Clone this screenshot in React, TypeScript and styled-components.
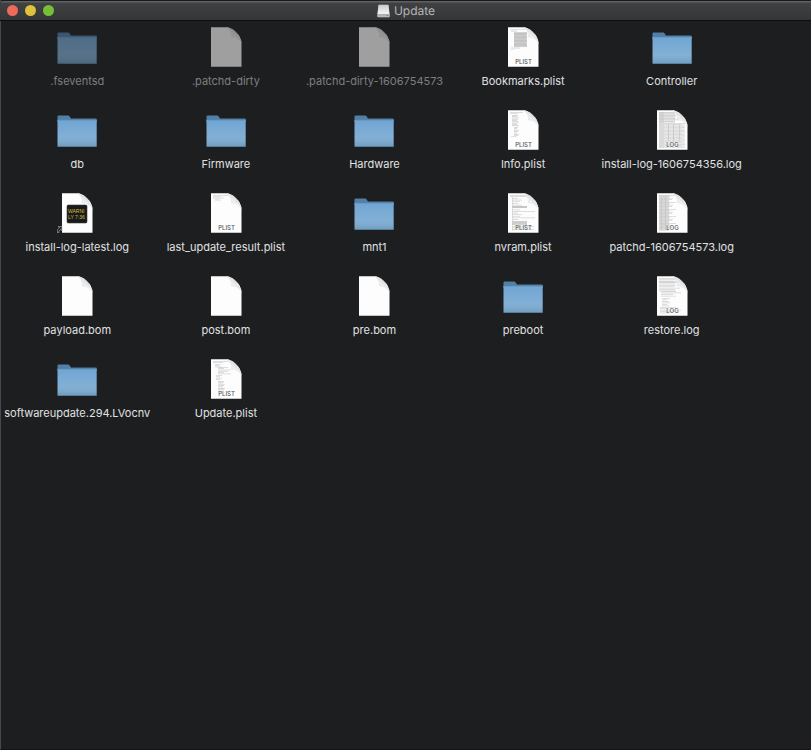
import React from "react";
import styled, { createGlobalStyle } from "styled-components";

const GlobalStyle = createGlobalStyle`
  * { box-sizing: border-box; }
  body { margin: 0; background: #1d1e20; }
`;

const Window = styled.main`
  display: flex;
  flex-direction: column;
  min-height: 100vh;
  background: #1d1e20;
  border-left: 1px solid #47494b;
  border-bottom: 1px solid #141216;
  font-family: Inter, "Liberation Sans", sans-serif;
  text-rendering: geometricPrecision;
`;

const TitleBar = styled.header`
  display: grid;
  grid-template-columns: 1fr auto 1fr;
  align-items: center;
  height: 21px;
  padding: 1px 6px 0 7px;
  margin-left: -1px;
  background: linear-gradient(#5f6062 0 1px, #404143 2px, #343537 100%) 0 1px no-repeat, #1a1a1c;
  border-bottom: 1px solid #0d0e0f;
  border-radius: 5px 0 0 0;
`;

const Lights = styled.div`
  display: flex;
  gap: 7px;
`;

const Light = styled.button<{ $color: string }>`
  width: 11px;
  height: 11px;
  padding: 0;
  border: 0;
  border-radius: 50%;
  background: ${(p) => p.$color};
`;

const Title = styled.h1`
  display: flex;
  align-items: center;
  gap: 4px;
  margin: 0;
  font-size: 12px;
  font-weight: 400;
  line-height: 18px;
  color: #b5b6b7;
`;

const FileGrid = styled.ul`
  display: grid;
  grid-template-columns: repeat(5, 1fr);
  row-gap: 21px;
  margin: 0;
  padding: 6px 65px 20px 2px;
  list-style: none;
`;

const FileButton = styled.button<{ $dim: boolean }>`
  display: flex;
  flex-direction: column;
  align-items: center;
  gap: 6px;
  width: 100%;
  padding: 0;
  border: 0;
  background: none;
  font: inherit;
  font-size: 11px;
  line-height: 16px;
  white-space: nowrap;
  color: ${(p) => (p.$dim ? "#7d7e80" : "#e0e1e2")};

  svg { opacity: ${(p) => (p.$dim ? 0.58 : 1)}; }
`;

type Line = [x: number, y: number, w: number, h?: number, tone?: string];

type Entry = {
  name: string;
  kind: "folder" | "page" | "terminal";
  dim?: boolean;
  badge?: "PLIST" | "LOG";
  lines?: Line[];
};

const rows = (x: number, y: number, n: number, step: number, widths: number[], tone = "#c4c4c4"): Line[] =>
  Array.from({ length: n }, (_, i) => [x, y + i * step, widths[i % widths.length], 0.7, tone]);

const entries: Entry[] = [
  { name: ".fseventsd", kind: "folder", dim: true },
  { name: ".patchd-dirty", kind: "page", dim: true },
  { name: ".patchd-dirty-1606754573", kind: "page", dim: true },
  {
    name: "Bookmarks.plist", kind: "page", badge: "PLIST",
    lines: [[7, 2, 15, 1, "#ddd"], [8, 3.6, 6, 1, "#ccc"], [11, 5, 13, 15, "#c9c9c9"],
      ...rows(11, 6, 10, 1.4, [13, 12, 13], "#b4b4b4"), [8, 20.5, 9, 1, "#ccc"], [7, 22, 4, 0.7, "#ddd"]],
  },
  { name: "Controller", kind: "folder" },
  { name: "db", kind: "folder" },
  { name: "Firmware", kind: "folder" },
  { name: "Hardware", kind: "folder" },
  {
    name: "Info.plist", kind: "page", badge: "PLIST",
    lines: [...rows(7, 2, 2, 1.2, [13, 8]), ...rows(9, 5, 9, 1.3, [6, 5, 7], "#bbb"), ...rows(11, 17, 7, 1.4, [4, 3, 5], "#bbb"), [8, 26, 5, 0.7, "#ccc"]],
  },
  {
    name: "install-log-1606754356.log", kind: "page", badge: "LOG",
    lines: [[7, 2, 16, 12, "#e4e4e4"], [7, 13, 26, 25, "#ebebeb"], [7, 2, 5, 36, "#d5d5d5"], ...rows(7, 2, 7, 1.5, [16, 17, 19]), ...rows(12, 13, 18, 1.4, [21, 18, 20], "#cecece"), [16, 14, 1, 17, "#c6c6c6"], [21, 14, 1, 17, "#c6c6c6"], [27, 14, 1, 17, "#cccccc"]],
  },
  { name: "install-log-latest.log", kind: "terminal" },
  {
    name: "last_update_result.plist", kind: "page", badge: "PLIST",
    lines: [...rows(7, 2, 3, 1.3, [15, 8, 11], "#ccc"), ...rows(9, 5.5, 2, 1.2, [4, 6], "#c8c8c8")],
  },
  { name: "mnt1", kind: "folder" },
  {
    name: "nvram.plist", kind: "page", badge: "PLIST",
    lines: [...rows(7, 2, 2, 1.3, [15, 17]), ...rows(9, 5, 5, 1.7, [6, 10, 8]), [9, 13, 15, 2, "#b8b8b8"], ...rows(9, 16.5, 7, 1.6, [8, 23, 6, 10]), [9, 28, 15, 4, "#c0c0c0"], ...rows(9, 33, 3, 1.6, [22, 17]), [9, 4, 0.7, 34, "#ccc"]],
  },
  {
    name: "patchd-1606754573.log", kind: "page", badge: "LOG",
    lines: [[7, 2, 10, 36, "#dadada"], [9, 4, 1, 33, "#c4c4c4"], [13, 4, 1, 33, "#c4c4c4"], ...rows(7, 2, 25, 1.4, [17, 11, 14, 13, 10])],
  },
  { name: "payload.bom", kind: "page" },
  { name: "post.bom", kind: "page" },
  { name: "pre.bom", kind: "page" },
  { name: "preboot", kind: "folder" },
  {
    name: "restore.log", kind: "page", badge: "LOG",
    lines: [...rows(7, 2, 10, 1.4, [16, 17, 15, 21]), [7, 5, 18, 2, "#d0d0d0"], ...rows(9, 15, 4, 1.6, [15, 20, 12]), ...rows(10, 22, 6, 1.5, [8, 5, 7]), ...rows(8, 31, 5, 1.4, [16, 9, 21])],
  },
  { name: "softwareupdate.294.LVocnv", kind: "folder" },
  {
    name: "Update.plist", kind: "page", badge: "PLIST",
    lines: [...rows(7, 2, 2, 1.3, [15, 10]), ...rows(9, 5, 3, 1.3, [6, 4, 7]), ...rows(12, 8, 6, 1.3, [10, 6, 13]), ...rows(10, 16, 4, 1.4, [6, 4]), ...rows(12, 22, 8, 1.4, [6, 5, 7], "#bbb")],
  },
];

function FolderIcon() {
  return (
    <svg width="40" height="40" viewBox="0 0 40 40" aria-hidden="true">
      <path d="M.5 8.5V6.5Q.5 5.5 1.5 5.5H11q1 0 1.5.7L14 8.5h25q.7 0 .7.8V12H.5Z" fill="#517fa5" />
      <rect x=".5" y="9.5" width="39.2" height="27.5" rx=".8" fill="url(#folderFace)" />
      <path d="M1 9.8h38.3" stroke="#4c7798" strokeWidth=".8" />
      <path d="M1 36.5h38.3" stroke="#547f9f" strokeWidth="1" />
    </svg>
  );
}

function PageIcon({ entry }: { entry: Entry }) {
  return (
    <svg width="40" height="40" viewBox="0 0 40 40" aria-hidden="true">
      <path d="M5 .2H20q5 0 9.5 4.5Q35.5 10 35.5 17v22.7H5Z" fill="#fdfdfd" />
      {entry.lines?.map(([x, y, w, h = 0.7, tone = "#c4c4c4"], i) => (
        <rect key={i} x={x} y={y} width={w} height={h} fill={tone} opacity=".8" />
      ))}
      <path d="M20 .2q5 0 9.5 4.5Q35.5 10 35.5 17q-3-6-10.3-7Q25 3 20 .2Z" fill="url(#pageFold)" />
      {entry.badge && (
        <text x="20.5" y="37" textAnchor="middle" fontFamily="Inter, sans-serif" fontSize="6" fontWeight="500" fill="#555" stroke="#fff" strokeWidth="1" paintOrder="stroke" strokeOpacity=".5">
          {entry.badge}
        </text>
      )}
      {entry.kind === "terminal" && (
        <>
          <rect x="10" y="12" width="20" height="18" rx="1.3" fill="#181a1c" stroke="#3d3f40" strokeWidth=".6" />
          <g fontFamily="Liberation Sans, sans-serif" fontSize="5" fill="#d6bf35">
            <text x="11" y="19.5">WARNI</text>
            <text x="11" y="26">LY 7:36</text>
          </g>
          <path d="M.3 39.8v-3L2.8 34.4 1.2 33.6H5v4.2l-.9-1.6L1.9 38v1.8Z" fill="#1b1d1f" stroke="#bbb" strokeWidth=".6" />
        </>
      )}
    </svg>
  );
}

function DriveIcon() {
  return (
    <svg width="13" height="14" viewBox="0 0 13 14" aria-hidden="true">
      <path d="M1.6.8h9.8l1.2 9v2.7q0 .8-.8.8H1.2q-.8 0-.8-.8V9.8Z" fill="#d7d8da" />
      <path d="M1.8 1h9.4l1 8.8H.7Z" fill="url(#driveTop)" />
      <rect x=".6" y="10" width="11.8" height="2.8" rx=".4" fill="#aeb0b3" />
      <path d="M9.8 11.5h1" stroke="#555" strokeWidth=".7" />
    </svg>
  );
}

function Gradients() {
  return (
    <svg width="0" height="0" aria-hidden="true">
      <defs>
        <linearGradient id="folderFace" x1="0" y1="0" x2="0" y2="1">
          <stop offset="0" stopColor="#70a6d4" />
          <stop offset=".65" stopColor="#82afd5" />
          <stop offset=".8" stopColor="#7fabce" />
          <stop offset="1" stopColor="#6f9bbd" />
        </linearGradient>
        <linearGradient id="pageFold" gradientUnits="userSpaceOnUse" x1="24" y1="12" x2="31" y2="4">
          <stop offset="0" stopColor="#d0d0d0" />
          <stop offset=".45" stopColor="#f0f0f0" />
          <stop offset="1" stopColor="#d4d4d4" />
        </linearGradient>
        <linearGradient id="driveTop" x1="0" y1="0" x2="0" y2="1">
          <stop offset="0" stopColor="#c8c9cc" />
          <stop offset="1" stopColor="#f7f7f8" />
        </linearGradient>
      </defs>
    </svg>
  );
}

const GradientStore = styled.div`
  height: 0;
  overflow: hidden;
`;

export default function App() {
  return (
    <>
      <GlobalStyle />
      <Window>
        <TitleBar>
          <Lights>
            <Light $color="#ed6b5a" aria-label="Close" />
            <Light $color="#dfc13c" aria-label="Minimize" />
            <Light $color="#78bf39" aria-label="Zoom" />
          </Lights>
          <Title>
            <DriveIcon />
            Update
          </Title>
        </TitleBar>
        <GradientStore>
          <Gradients />
        </GradientStore>
        <FileGrid>
          {entries.map((entry) => (
            <li key={entry.name}>
              <FileButton $dim={!!entry.dim}>
                {entry.kind === "folder" ? <FolderIcon /> : <PageIcon entry={entry} />}
                {entry.name}
              </FileButton>
            </li>
          ))}
        </FileGrid>
      </Window>
    </>
  );
}
